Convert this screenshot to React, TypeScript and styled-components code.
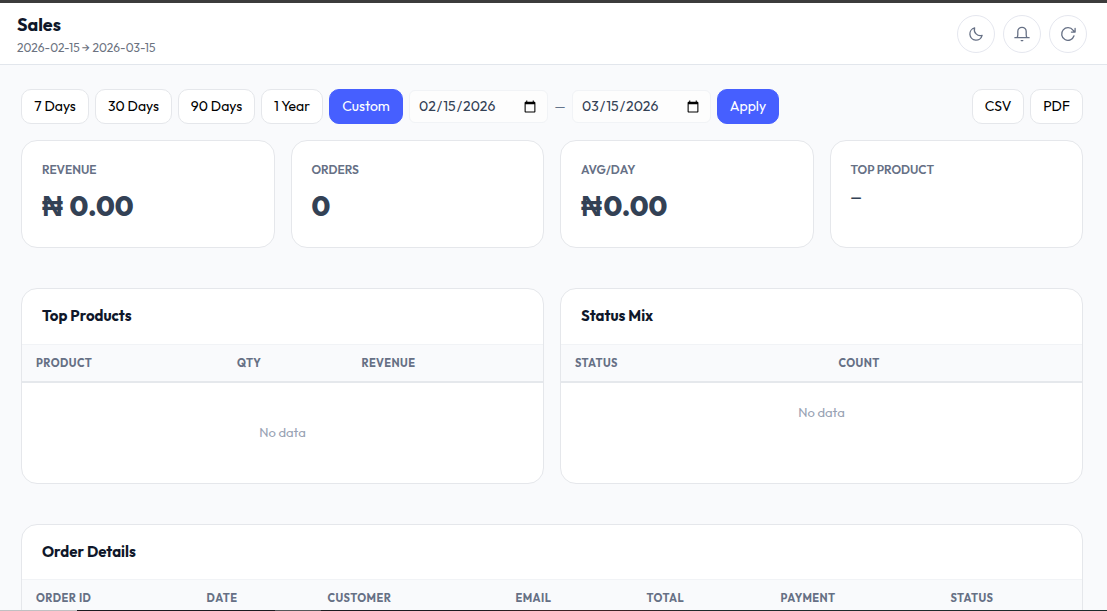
import React from "react";
import styled, { createGlobalStyle, css } from "styled-components";

const Global = createGlobalStyle`
  *, *::before, *::after { box-sizing: border-box; }
  html, body { margin: 0; height: 611px; overflow: hidden; }
  body { background: #f9fafc; color: #0f172a; font-family: Outfit, Lato, "Liberation Sans", sans-serif; }
  button, input { font-family: inherit; }
`;

const Page = styled.div`
  height: 611px;
  overflow: hidden;
  display: flex;
  flex-direction: column;
  border-top: 3px solid #3c3c3c;
`;

const Viewport = styled.div`
  flex: 1;
  min-height: 0;
  overflow: hidden;
`;

const BottomEdge = styled.div`
  flex: none;
  height: 1px;
  background: linear-gradient(90deg, #c0c0c2 0 77px, #1c1c20 77px 275px, #55585a 275px 321px, #1c1c20 321px 480px, #3a2226 540px 620px, #1d2b2b 700px);
`;

const Header = styled.header`
  height: 62px;
  display: flex;
  align-items: center;
  justify-content: space-between;
  padding: 0 20px 0 17px;
  background: #fff;
  border-bottom: 1px solid #e2e6ec;
`;

const Title = styled.h1`
  margin: 0;
  padding-top: 3px;
  font-size: 18px;
  line-height: 24px;
  font-weight: 700;
`;

const Range = styled.div`
  margin-top: 2px;
  font-size: 12px;
  line-height: 18px;
  color: #6b7280;
`;

const HeaderActions = styled.div`
  display: flex;
  gap: 8px;
`;

const IconButton = styled.button`
  width: 38px;
  height: 38px;
  padding: 0;
  display: grid;
  place-items: center;
  border: 1px solid #e5e7ef;
  border-radius: 50%;
  background: #fff;
  color: #667085;
`;

const Main = styled.main`
  padding: 24px 24px 0 21px;
`;

const Toolbar = styled.div`
  display: flex;
  align-items: center;
  justify-content: space-between;
  height: 35px;
`;

const Group = styled.div`
  display: flex;
  align-items: center;
  gap: 6px;
`;

const Button = styled.button<{ $w: number; $primary?: boolean }>`
  width: ${(p) => p.$w}px;
  height: 35px;
  padding: 0 0 2px;
  border-radius: 10px;
  border: 1px solid #e5e7eb;
  background: #fff;
  color: #000;
  font-size: 14px;
  line-height: 18px;
  white-space: nowrap;
  ${(p) =>
    p.$primary &&
    css`
      background: #465fff;
      border-color: #465fff;
      color: #fff;
    `}
`;

const DateInput = styled.input`
  width: 139px;
  height: 33px;
  padding: 0 8px 2px;
  border: 1px solid #f1f3f6;
  border-radius: 6px;
  background: #fdfdfd;
  color: #334155;
  font-size: 14px;

  &::-webkit-calendar-picker-indicator {
    position: relative;
    top: 1px;
  }
`;

const Dash = styled.span`
  width: 12px;
  padding-bottom: 1px;
  text-align: center;
  font-size: 13px;
  color: #64748b;
`;

const Stats = styled.section`
  display: grid;
  grid-template-columns: repeat(4, 1fr);
  gap: 16px;
  margin-top: 16px;
`;

const Card = styled.div`
  background: #fff;
  border: 1px solid #e5e7eb;
  border-radius: 16px;
  overflow: hidden;
`;

const Stat = styled(Card)`
  height: 108px;
  padding: 20px;
`;

const StatLabel = styled.div`
  font-size: 12px;
  line-height: 18px;
  font-weight: 600;
  color: #667085;
`;

const StatValue = styled.div<{ $small?: boolean }>`
  margin-top: ${(p) => (p.$small ? 8 : 9)}px;
  font-size: ${(p) => (p.$small ? 13 : 28)}px;
  line-height: ${(p) => (p.$small ? 20 : 36)}px;
  font-weight: ${(p) => (p.$small ? 600 : 800)};
  color: #334155;
`;

const Naira = styled.span`
  display: inline-block;
  width: 22.4px;
  font-size: 29px;
  line-height: 1;
  font-family: "Liberation Sans", sans-serif;
`;

const Panels = styled.section`
  display: grid;
  grid-template-columns: 1fr 1fr;
  gap: 16px;
  margin: 40px 0;
`;

const Panel = styled(Card)<{ $h: number }>`
  height: ${(p) => p.$h}px;
`;

const PanelTitle = styled.h2<{ $h: number }>`
  margin: 0;
  height: ${(p) => p.$h}px;
  padding: 17px 20px 0;
  border-bottom: 1px solid #f1f3f6;
  font-size: 15px;
  line-height: 20px;
  font-weight: 700;
`;

const HeadRow = styled.div<{ $cols: string }>`
  display: grid;
  grid-template-columns: ${(p) => p.$cols};
  height: 38px;
  align-items: center;
  background: #f9fafc;
  border-bottom: 2px solid #e5e8ec;
`;

const HeadCell = styled.div`
  padding-left: 14px;
  font-size: 11px;
  line-height: 16px;
  font-weight: 700;
  letter-spacing: 0.45px;
  color: #667085;
  white-space: nowrap;
`;

const Empty = styled.div<{ $pad: number }>`
  padding-top: ${(p) => p.$pad}px;
  text-align: center;
  font-size: 13px;
  line-height: 20px;
  color: #98a2b3;
`;

const Icon = ({ children }: { children: React.ReactNode }) => (
  <svg width="16" height="16" viewBox="0 0 16 16" fill="none" stroke="currentColor" strokeWidth="1.3" strokeLinecap="round" strokeLinejoin="round">
    {children}
  </svg>
);

const ranges = [
  { label: "7 Days", w: 68 },
  { label: "30 Days", w: 77 },
  { label: "90 Days", w: 77 },
  { label: "1 Year", w: 62 },
];

const stats = [
  { label: "REVENUE", value: <><Naira>₦</Naira> 0.00</> },
  { label: "ORDERS", value: "0" },
  { label: "AVG/DAY", value: <><Naira>₦</Naira>0.00</> },
  { label: "TOP PRODUCT", value: "—", small: true },
];

function Table({ title, cols, heads, h, titleH, pad }: { title: string; cols: string; heads: string[]; h: number; titleH: number; pad?: number }) {
  return (
    <Panel $h={h}>
      <PanelTitle $h={titleH}>{title}</PanelTitle>
      <HeadRow $cols={cols}>
        {heads.map((t) => (
          <HeadCell key={t}>{t}</HeadCell>
        ))}
      </HeadRow>
      {pad !== undefined && <Empty $pad={pad}>No data</Empty>}
    </Panel>
  );
}

export default function App() {
  return (
    <Page>
      <Global />
      <Viewport>
        <Header>
          <div>
            <Title>Sales</Title>
            <Range>2026-02-15 → 2026-03-15</Range>
          </div>
          <HeaderActions>
            <IconButton aria-label="Theme">
              <Icon>
                <path d="M6.6 1.900A6.200 6.200 0 1 0 14.100 9.400 6 6 0 0 1 6.600 1.900Z" />
              </Icon>
            </IconButton>
            <IconButton aria-label="Notifications">
              <Icon>
                <path d="M.9 11.700h14.200M2.900 11.600c.7-.8.9-1.700.9-2.900V5.500a4.200 4.200 0 0 1 8.400 0v3.200c0 1.200.2 2.100.9 2.900M7.200 14.600h1.600" />
              </Icon>
            </IconButton>
            <IconButton aria-label="Refresh">
              <Icon>
                <path d="M14 9.800A6.300 6.300 0 1 1 13 4.200L14.900 6M15.100 2.400v3.700h-3.700" />
              </Icon>
            </IconButton>
          </HeaderActions>
        </Header>
        <Main>
          <Toolbar>
            <Group>
              {ranges.map((r) => (
                <Button key={r.label} $w={r.w}>{r.label}</Button>
              ))}
              <Button $w={74} $primary>Custom</Button>
              <DateInput type="date" defaultValue="2026-02-15" />
              <Dash>—</Dash>
              <DateInput type="date" defaultValue="2026-03-15" />
              <Button $w={62} $primary>Apply</Button>
            </Group>
            <Group>
              <Button $w={52}>CSV</Button>
              <Button $w={53}>PDF</Button>
            </Group>
          </Toolbar>
          <Stats>
            {stats.map((s) => (
              <Stat key={s.label}>
                <StatLabel>{s.label}</StatLabel>
                <StatValue $small={s.small}>{s.value}</StatValue>
              </Stat>
            ))}
          </Stats>
          <Panels>
            <Table title="Top Products" h={196} titleH={56} cols="201px 124.500px 1fr" heads={["PRODUCT", "QTY", "REVENUE"]} pad={39} />
            <Table title="Status Mix" h={196} titleH={56} cols="263.500px 1fr" heads={["STATUS", "COUNT"]} pad={19} />
          </Panels>
          <Table
            title="Order Details"
            h={200}
            titleH={55}
            cols="170.500px 121px 188px 131px 134px 170px 1fr"
            heads={["ORDER ID", "DATE", "CUSTOMER", "EMAIL", "TOTAL", "PAYMENT", "STATUS"]}
          />
        </Main>
      </Viewport>
      <BottomEdge />
    </Page>
  );
}
